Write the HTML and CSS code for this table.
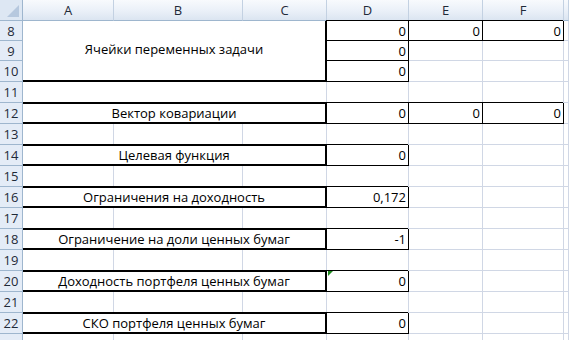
FILE: index.html
```html
<!DOCTYPE html>
<html lang="ru">
<head>
    <meta charset="UTF-8">
    <title>Портфель ценных бумаг</title>
    <link rel="stylesheet" href="styles.css">
</head>
<body>
    <div class="sheet">
        <!-- заголовки столбцов -->
        <div class="corner"></div>
        <div class="col-h">A</div>
        <div class="col-h">B</div>
        <div class="col-h">C</div>
        <div class="col-h">D</div>
        <div class="col-h">E</div>
        <div class="col-h">F</div>
        <div class="col-h"></div>

        <!-- 8-10: переменные -->
        <div class="row-h">8</div>
        <div class="c label big">Ячейки переменных задачи</div>
        <div class="c num box">0</div>
        <div class="c num box">0</div>
        <div class="c num box">0</div>
        <div class="c"></div>

        <div class="row-h">9</div>
        <div class="c num box">0</div>
        <div class="c"></div>
        <div class="c"></div>
        <div class="c"></div>

        <div class="row-h">10</div>
        <div class="c num box">0</div>
        <div class="c"></div>
        <div class="c"></div>
        <div class="c"></div>

        <div class="row-h">11</div>
        <div class="c merged"></div>
        <div class="c"></div>
        <div class="c"></div>
        <div class="c"></div>
        <div class="c"></div>

        <div class="row-h">12</div>
        <div class="c label">Вектор ковариации</div>
        <div class="c num box">0</div>
        <div class="c num box">0</div>
        <div class="c num box">0</div>
        <div class="c"></div>

        <div class="row-h">13</div>
        <div class="c"></div><div class="c"></div><div class="c"></div>
        <div class="c"></div><div class="c"></div><div class="c"></div><div class="c"></div>

        <div class="row-h">14</div>
        <div class="c label">Целевая функция</div>
        <div class="c num box">0</div>
        <div class="c"></div><div class="c"></div><div class="c"></div>

        <div class="row-h">15</div>
        <div class="c"></div><div class="c"></div><div class="c"></div>
        <div class="c"></div><div class="c"></div><div class="c"></div><div class="c"></div>

        <div class="row-h">16</div>
        <div class="c label">Ограничения на доходность</div>
        <div class="c num box">0,172</div>
        <div class="c"></div><div class="c"></div><div class="c"></div>

        <div class="row-h">17</div>
        <div class="c"></div><div class="c"></div><div class="c"></div>
        <div class="c"></div><div class="c"></div><div class="c"></div><div class="c"></div>

        <div class="row-h">18</div>
        <div class="c label">Ограничение на доли ценных бумаг</div>
        <div class="c num box">-1</div>
        <div class="c"></div><div class="c"></div><div class="c"></div>

        <div class="row-h">19</div>
        <div class="c"></div><div class="c"></div><div class="c"></div>
        <div class="c"></div><div class="c"></div><div class="c"></div><div class="c"></div>

        <div class="row-h">20</div>
        <div class="c label">Доходность портфеля ценных бумаг</div>
        <div class="c num box warn">0</div>
        <div class="c"></div><div class="c"></div><div class="c"></div>

        <div class="row-h">21</div>
        <div class="c"></div><div class="c"></div><div class="c"></div>
        <div class="c"></div><div class="c"></div><div class="c"></div><div class="c"></div>

        <div class="row-h">22</div>
        <div class="c label">СКО портфеля ценных бумаг</div>
        <div class="c num box">0</div>
        <div class="c"></div><div class="c"></div><div class="c"></div>

        <!-- следующая строка видна только краем -->
        <div class="row-h"></div>
        <div class="c"></div><div class="c"></div><div class="c"></div>
        <div class="c"></div><div class="c"></div><div class="c"></div><div class="c"></div>
    </div>
</body>
</html>
```

FILE: styles.css
```css
* {
    box-sizing: border-box;
}

html, body {
    margin: 0;
    height: 100%;
    overflow: hidden;
    background: #fff;
}

body {
    font-family: 'Open Sans', 'DejaVu Sans', sans-serif;
    font-size: 13px;
    color: #000;
}

.sheet {
    display: grid;
    grid-template-columns: 23px 91px 129px 84px 82px 74px 81px 1fr;
    grid-template-rows: 21px 20px 20px 21px repeat(13, 21px);
    line-height: 21px;
}

/* шапка листа */
.corner {
    background: #dde7f3;
    border-right: 1px solid #9eb6ce;
    border-bottom: 1px solid #9eb6ce;
    position: relative;
}

.corner::after {
    content: '';
    position: absolute;
    right: 3px;
    bottom: 3px;
    border-left: 12px solid transparent;
    border-bottom: 12px solid #b6c8de;
}

.col-h {
    background: linear-gradient(#f8fafd, #eaf0f8 55%, #dbe5f1);
    border-right: 1px solid #c3d1e2;
    border-bottom: 1px solid #9eb6ce;
    text-align: center;
    color: #1f2a38;
    line-height: 20px;
}

.row-h {
    background: #e4ecf7;
    border-right: 1px solid #9eb6ce;
    border-bottom: 1px solid #9eb6ce;
    text-align: center;
    color: #1f2a38;
}

/* ячейки */
.c {
    border-right: 1px solid #d0d7e5;
    border-bottom: 1px solid #d0d7e5;
    white-space: nowrap;
    position: relative;
}

.merged {
    grid-column: span 3;
}

.label {
    grid-column: span 3;
    text-align: center;
    border-top: 1px solid #000;
    border-right: 2px solid #000;
    border-bottom: 2px solid #000;
    box-shadow: 0 -1px 0 #000;
    line-height: 19px;
}

.label.big {
    grid-row: span 3;
    display: flex;
    align-items: center;
    justify-content: center;
    border-top: none;
    box-shadow: none;
    padding-bottom: 2px;
}

.num {
    text-align: right;
    padding-right: 2px;
}

.box {
    border-right-color: #000;
    border-bottom-color: #000;
    box-shadow: -1px -1px 0 #000;
}

/* индикатор ошибки в углу ячейки */
.warn::before {
    content: '';
    position: absolute;
    left: 1px;
    top: 0;
    border-top: 5px solid #1e8a1e;
    border-right: 5px solid transparent;
}
```
